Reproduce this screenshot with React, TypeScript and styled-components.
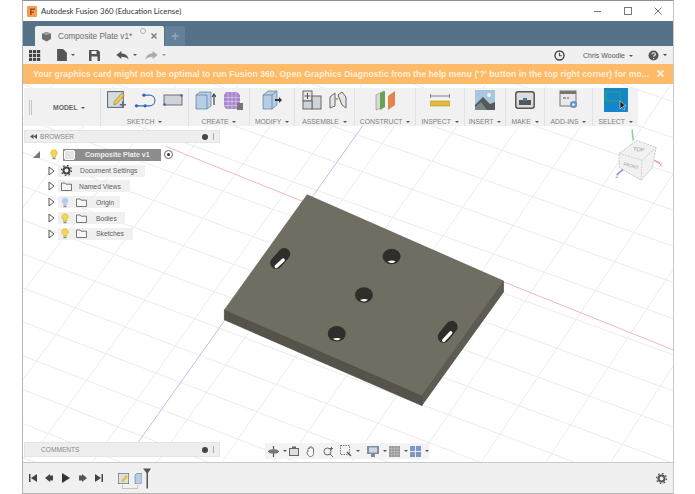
import React from 'react';
import styled, { createGlobalStyle } from 'styled-components';

const GlobalStyle = createGlobalStyle`
  html, body { margin: 0; padding: 0; background: #fff; }
  * { box-sizing: border-box; }
`;

const Page = styled.div`
  width: 695px;
  height: 494px;
  padding: 0 21px 0 22px;
  background: #fff;
  font-family: "Liberation Sans", Arial, sans-serif;
  overflow: hidden;
`;

const Window = styled.div`
  width: 652px;
  height: 494px;
  display: flex;
  flex-direction: column;
  border-top: 1px solid #8f8f8f;
  border-left: 1px solid #b5b5b5;
  border-right: 1px solid #c8c8c8;
`;

const TitleBar = styled.div`
  height: 20px;
  display: flex;
  align-items: center;
  padding-left: 4px;
  background: #fff;
  font-family: Lato, sans-serif;
  font-size: 7.8px;
  color: #333;
`;

const TitleText = styled.span`
  margin-left: 4px;
  flex: 1;
`;

const WindowButton = styled.div`
  width: 30px;
  height: 20px;
  display: flex;
  align-items: center;
  justify-content: center;
`;

const TabBar = styled.div`
  height: 25px;
  display: flex;
  align-items: flex-end;
  padding-left: 12px;
  background: #557289;
`;

const Tab = styled.div`
  position: relative;
  width: 129px;
  height: 20px;
  display: flex;
  align-items: center;
  padding-left: 6px;
  background: #f0f0f0;
  border-radius: 2px 2px 0 0;
  font-size: 8.2px;
  color: #6a6a6a;
`;

const TabLabel = styled.span`
  margin-left: 6px;
`;

const TabDot = styled.span`
  position: absolute;
  left: 105px;
  top: 2px;
  width: 6px;
  height: 6px;
  border-radius: 50%;
  border: 1px solid #8fc7c0;
`;

const TabClose = styled.span`
  position: absolute;
  left: 116px;
  top: 7px;
  line-height: 0;
`;

const NewTab = styled.div`
  width: 20px;
  height: 20px;
  margin-left: 1px;
  display: flex;
  align-items: center;
  justify-content: center;
  background: #64809a;
  border-radius: 2px 2px 0 0;
  color: #8ca3b7;
  font-size: 14px;
  font-weight: bold;
`;

const QuickBar = styled.div`
  height: 18px;
  display: flex;
  align-items: center;
  background: #f0f0f0;
  padding-left: 6px;
`;

const QuickGroup = styled.div<{ $w: number }>`
  width: ${(p) => p.$w}px;
  display: flex;
  align-items: center;
  gap: 2px;
`;

const Spacer = styled.div`
  flex: 1;
`;

const UserName = styled.span`
  font-size: 7px;
  color: #555;
  width: 65px;
  white-space: nowrap;
`;

const Caret = styled.span<{ $c?: string }>`
  display: inline-block;
  width: 0;
  height: 0;
  vertical-align: middle;
  margin-left: 2px;
  border-left: 2px solid transparent;
  border-right: 2px solid transparent;
  border-top: 2.5px solid ${(p) => p.$c || '#555'};
`;

const Banner = styled.div`
  height: 20px;
  display: flex;
  align-items: center;
  padding-left: 10px;
  background: #fdbb69;
  color: #fdeed8;
  font-size: 8.57px;
  font-weight: bold;
  white-space: nowrap;
  letter-spacing: 0.07px;
`;

const BannerClose = styled.span`
  position: absolute;
  left: 633px;
  top: 5px;
  line-height: 0;
`;

const BannerWrap = styled.div`
  position: relative;
`;

const Viewport = styled.div`
  position: relative;
  flex: 1;
  background: #fff;
  overflow: hidden;
`;

const SceneSvg = styled.svg`
  position: absolute;
  inset: 0;
  width: 100%;
  height: 100%;
`;

const Ribbon = styled.div`
  position: absolute;
  left: 1px;
  top: 4px;
  width: 614px;
  height: 38px;
  display: flex;
  background: #f1f1f1;
`;

const GripSection = styled.div`
  width: 77px;
  display: flex;
  align-items: center;
  padding-left: 5px;
  border-right: 1px solid #e2e2e2;
`;

const Grip = styled.div`
  width: 3px;
  height: 15px;
  border-left: 1px solid #c4c4c4;
  border-right: 1px solid #c4c4c4;
`;

const ModelLabel = styled.span`
  margin-left: 21px;
  font-size: 6.8px;
  font-weight: bold;
  color: #666;
`;

const Section = styled.div<{ $w: number; $last?: boolean }>`
  width: ${(p) => p.$w}px;
  display: flex;
  flex-direction: column;
  align-items: center;
  border-right: ${(p) => (p.$last ? 'none' : '1px solid #e2e2e2')};
`;

const IconRow = styled.div`
  height: 24px;
  display: flex;
  align-items: center;
  gap: 7px;
`;

const SectionLabel = styled.div`
  margin-top: 6px;
  font-size: 6.8px;
  color: #808080;
  white-space: nowrap;
`;

const Browser = styled.div`
  position: absolute;
  left: 1px;
  top: 46px;
  width: 196px;
`;

const PanelHeader = styled.div`
  height: 13px;
  display: flex;
  align-items: center;
  padding: 0 5px 0 5px;
  background: #eeeeee;
  border: 1px solid #e4e4e4;
  font-size: 6.6px;
  color: #8a8a8a;
`;

const HeaderTitle = styled.span<{ $indent: number }>`
  margin-left: ${(p) => p.$indent}px;
  flex: 1;
`;

const PinDot = styled.span`
  width: 6px;
  height: 6px;
  border-radius: 50%;
  background: #444;
  margin-right: 5px;
`;

const PanelEdge = styled.span`
  width: 1px;
  height: 7px;
  background: #aaa;
`;

const Tree = styled.div`
  display: flex;
  flex-direction: column;
  padding-top: 4px;
`;

const TreeRow = styled.div<{ $pad: number }>`
  height: 15.8px;
  display: flex;
  align-items: center;
  padding-left: ${(p) => p.$pad}px;
`;

const RootGap = styled.span`
  width: 10px;
`;

const Chip = styled.div<{ $w: number }>`
  width: ${(p) => p.$w}px;
  height: 12px;
  margin-left: 3px;
  display: flex;
  align-items: center;
  gap: 7px;
  padding-left: 3px;
  background: #f0f0f0;
  font-size: 6.8px;
  color: #5c5c5c;
  white-space: nowrap;
`;

const ChipText = styled.span<{ $ml: number }>`
  margin-left: ${(p) => p.$ml}px;
`;

const RootChip = styled.div`
  width: 98px;
  height: 12px;
  margin-left: 5px;
  display: flex;
  align-items: center;
  background: #8d8d8d;
  color: #ededed;
  font-size: 7px;
  font-weight: bold;
  white-space: nowrap;
`;

const RootIcon = styled.span`
  width: 11px;
  height: 10px;
  margin-left: 1px;
  background: #e4e4e4;
  border: 1px solid #fff;
  border-radius: 2px;
`;

const RootText = styled.span`
  margin-left: 10px;
`;

const Radio = styled.span`
  width: 9px;
  height: 9px;
  margin-left: 3px;
  border: 1px solid #666;
  border-radius: 50%;
  display: flex;
  align-items: center;
  justify-content: center;
  &::after {
    content: '';
    width: 3px;
    height: 3px;
    border-radius: 50%;
    background: #333;
  }
`;

const Comments = styled(PanelHeader)`
  position: absolute;
  left: 1px;
  bottom: 5px;
  width: 196px;
  height: 15px;
`;

const NavBar = styled.div`
  position: absolute;
  left: 242px;
  bottom: 3px;
  width: 164px;
  height: 16px;
  display: flex;
  align-items: center;
  gap: 2px;
  padding-left: 3px;
  background: #f3f3f3;
`;

const NavGap = styled.span<{ $w: number }>`
  width: ${(p) => p.$w}px;
`;

const Timeline = styled.div`
  position: relative;
  height: 32px;
  display: flex;
  align-items: center;
  padding: 0 6px 0 6px;
  background: #f0f0f0;
  border-top: 1px solid #c9c9c9;
  border-bottom: 1px solid #b5b5b5;
`;

const Transport = styled.div`
  display: flex;
  align-items: center;
  gap: 8px;
`;

const Steps = styled.div`
  display: flex;
  align-items: center;
  gap: 5px;
  margin-left: 15px;
`;

const Playhead = styled.span`
  margin-left: -4px;
`;

const Bracket = styled.span`
  position: absolute;
  left: 99px;
  top: 22px;
  width: 16px;
  height: 4px;
  border: 1px solid #c4c4c4;
  border-top: none;
`;

const S = ({ w, h = w, vb, children }: { w: number; h?: number; vb?: string; children: React.ReactNode }) => (
  <svg width={w} height={h} viewBox={vb || `0 0 ${w} ${h}`} style={{ display: 'block', flex: 'none' }}>
    {children}
  </svg>
);

const Bulb = ({ c }: { c: string }) => (
  <S w={8} h={11}>
    <path d="M4 .8a3.2 3.2 0 0 0-1.8 5.9V8h3.6V6.7A3.2 3.2 0 0 0 4 .8z" fill={c} stroke="#c9a93a" strokeOpacity={c === '#f6d84a' ? 1 : 0} strokeWidth=".5" />
    <rect x="2.5" y="8.6" width="3" height="1.6" fill="#888" />
  </S>
);

const Folder = () => (
  <S w={11} h={9}>
    <path d="M.5 8.5V1h3.5l1 1.2h5.5v6.3z" fill="#f6f6f6" stroke="#666" strokeWidth=".9" />
  </S>
);

const Tri = () => (
  <S w={7} h={10}>
    <path d="M1 1l5 4-5 4z" fill="#fff" stroke="#555" strokeWidth="1" />
  </S>
);

const Gear = () => (
  <S w={11} h={11}>
    <circle cx="5.5" cy="5.5" r="3" fill="none" stroke="#444" strokeWidth="2" />
    <circle cx="5.5" cy="5.5" r="5" fill="none" stroke="#444" strokeWidth="1.4" strokeDasharray="1.6 2.3" />
  </S>
);

const gridLines = () => {
  const out: React.ReactNode[] = [];
  // family running with the red axis, slope eases a little with distance
  for (let i = -14; i < 26; i++) {
    const y0 = 84 + i * 34;
    out.push(<line key={`a${i}`} x1={22} y1={y0} x2={674} y2={y0 + 652 * (0.36 + i * 0.0035)} />);
  }
  // family running with the blue axis
  for (let i = -14; i < 26; i++) {
    const x0 = 362 + i * 62 - 210;
    out.push(<line key={`b${i}`} x1={x0 + 210} y1={84} x2={x0 - 60 + i * 3} y2={462} />);
  }
  return out;
};

const Scene = () => (
  <SceneSvg viewBox="22 84 652 378">
    <g stroke="#e9ebef" strokeWidth="1">{gridLines()}</g>
    <line x1="165" y1="146" x2="674" y2="350" stroke="#f0b9b9" strokeWidth="1" />
    <line x1="368" y1="118" x2="136" y2="445" stroke="#bcc1ec" strokeWidth="1" />
    <path d="M224 310L422 396V406L224 320z" fill="#55534a" stroke="#3e3d35" strokeWidth=".6" />
    <path d="M422 396L504 281V292L422 406z" fill="#5d5b52" stroke="#3e3d35" strokeWidth=".6" />
    <path d="M307 194.5L504 281L422 396L224 310z" fill="#706d63" stroke="#5a584e" strokeWidth=".6" />
    {[[391.7, 256.5], [364, 295], [336.7, 334]].map(([x, y]) => (
      <g key={x}>
        <ellipse cx={x} cy={y} rx={9} ry={7.8} fill="#2f2e2a" />
        <path d={`M${x - 4} ${y + 5}Q${x} ${y + 3.4} ${x + 4} ${y + 4.6}Q${x + 1} ${y + 8.2} ${x - 4} ${y + 5}z`} fill="#fff" />
      </g>
    ))}
    {[[284, 254, 276, 263], [452, 327, 444, 337]].map(([a, b, c, d]) => (
      <g key={a}>
        <line x1={a} y1={b} x2={c} y2={d} stroke="#2f2e2a" strokeWidth="12" strokeLinecap="round" />
        <line x1={a - 1} y1={b + 6} x2={c} y2={d + 3.5} stroke="#fff" strokeWidth="3.4" strokeLinecap="round" />
      </g>
    ))}
    {/* view cube */}
    <g>
      <path d="M620 153L638 140L657 147L653 168L642 180L620 167z" fill="#f1f1f1" />
      <path d="M620 153L643 160L657 147M643 160L642 180" fill="none" stroke="#c6c6c6" strokeWidth=".8" strokeDasharray="2 1" />
      <path d="M620 153L638 140L657 147L653 168L642 180L620 167z" fill="none" stroke="#bdbdbd" strokeWidth=".8" strokeDasharray="2 1" />
      <text x="634" y="151" fontSize="5.5" fill="#999" fontFamily="Liberation Sans" transform="rotate(6 640 150)">TOP</text>
      <text x="624" y="167" fontSize="4.5" fill="#999" fontFamily="Liberation Sans" transform="rotate(14 632 166)">FRONT</text>
      <line x1="634" y1="140" x2="633" y2="129" stroke="#86d99a" strokeWidth="1.6" />
      <line x1="655" y1="160" x2="661" y2="163" stroke="#f29a9a" strokeWidth="1.6" />
      <line x1="624" y1="169" x2="618" y2="174" stroke="#9090ea" strokeWidth="1.6" />
      <text x="616" y="178" fontSize="5.5" fill="#8a8ae8" fontFamily="Liberation Sans">Z</text>
      <text x="660" y="167" fontSize="5.5" fill="#e88a8a" fontFamily="Liberation Sans">X</text>
    </g>
  </SceneSvg>
);

const App: React.FC = () => (
  <Page>
    <GlobalStyle />
    <Window>
      <TitleBar>
        <S w={10} h={11}>
          <rect width="10" height="11" rx="1" fill="#f0a050" />
          <path d="M3 2.5h5v1.5H4.6v1.4H7v1.4H4.6V9H3z" fill="#b4451f" />
        </S>
        <TitleText>Autodesk Fusion 360 (Education License)</TitleText>
        <WindowButton>
          <S w={10} h={10}><line x1="1" y1="5.5" x2="8" y2="5.5" stroke="#777" /></S>
        </WindowButton>
        <WindowButton>
          <S w={10} h={10}><rect x="1.5" y="1.5" width="7" height="7" fill="none" stroke="#777" /></S>
        </WindowButton>
        <WindowButton>
          <S w={10} h={10}><path d="M1.5 1.5l7 7M8.5 1.5l-7 7" stroke="#777" /></S>
        </WindowButton>
      </TitleBar>

      <TabBar>
        <Tab>
          <S w={11} h={11}>
            <path d="M1 2.5L5.5 1 10 2.5V8L5.5 10.5 1 8z" fill="#6f6f6f" />
            <path d="M1 2.5L5.5 4 10 2.5 5.5 1z" fill="#a4a4a4" />
          </S>
          <TabLabel>Composite Plate v1*</TabLabel>
          <TabDot />
          <TabClose>
            <S w={6} h={6}><path d="M.5.5l5 5M5.5.5l-5 5" stroke="#777" strokeWidth="1.4" /></S>
          </TabClose>
        </Tab>
        <NewTab>+</NewTab>
      </TabBar>

      <QuickBar>
        <QuickGroup $w={28}>
          <S w={12} h={11}>
            {[0, 4, 8].map((x) => [0, 4, 8].map((y) => <rect key={`${x}${y}`} x={x} y={y} width="3.2" height="3.2" fill="#444" />))}
          </S>
        </QuickGroup>
        <QuickGroup $w={32}>
          <S w={10} h={12} vb="0 0 9 11"><path d="M0 0h5.5L9 3.5V11H0z" fill="#555" /></S>
          <Caret />
        </QuickGroup>
        <QuickGroup $w={27}>
          <S w={11} h={11}>
            <path d="M0 0h9l2 2v9H0z" fill="#555" />
            <rect x="2.5" y="1" width="5" height="3" fill="#f0f0f0" />
            <rect x="2.5" y="6.5" width="6" height="4.5" fill="#f0f0f0" />
          </S>
        </QuickGroup>
        <QuickGroup $w={29}>
          <S w={13} h={9} vb="0 0 11 8"><path d="M0 3.5L4.5 0v2.2C8 2.2 10 4 11 7.5 9.5 5.8 7.5 5 4.5 5v2z" fill="#555" /></S>
          <Caret />
        </QuickGroup>
        <QuickGroup $w={20}>
          <S w={13} h={9} vb="0 0 11 8"><path d="M11 3.5L6.5 0v2.2C3 2.2 1 4 0 7.5 1.500 5.800 3.500 5 6.500 5v2z" fill="#aaa" /></S>
          <Caret $c="#999" />
        </QuickGroup>
        <Spacer />
        <QuickGroup $w={29}>
          <S w={11} h={11}>
            <circle cx="5.5" cy="5.5" r="4.5" fill="none" stroke="#444" strokeWidth="1.4" />
            <path d="M5.5 2.8v3h2.4" fill="none" stroke="#444" strokeWidth="1.1" />
          </S>
        </QuickGroup>
        <UserName>Chris Woodle <Caret /></UserName>
        <QuickGroup $w={25}>
          <S w={11} h={11}>
            <circle cx="5.5" cy="5.5" r="5" fill="#555" />
            <path d="M3.8 4.2c.2-2 3.6-2 3.6 0 0 1.3-1.8 1.3-1.8 2.6" fill="none" stroke="#f0f0f0" strokeWidth="1.1" />
            <circle cx="5.6" cy="8.6" r=".7" fill="#f0f0f0" />
          </S>
          <Caret $c="#444" />
        </QuickGroup>
      </QuickBar>

      <BannerWrap>
        <Banner>Your graphics card might not be optimal to run Fusion 360. Open Graphics Diagnostic from the help menu ('?' button in the top right corner) for mo...</Banner>
        <BannerClose>
          <S w={9} h={9}><path d="M1.5 1.5l6 6M7.5 1.5l-6 6" stroke="#fdeed8" strokeWidth="1.8" /></S>
        </BannerClose>
      </BannerWrap>

      <Viewport>
        <Scene />

        <Ribbon>
          <GripSection>
            <Grip />
            <ModelLabel>MODEL <Caret /></ModelLabel>
          </GripSection>
          <Section $w={88}>
            <IconRow>
              <S w={20} h={20} vb="0 0 19 19">
                <rect x=".5" y="1.5" width="15" height="15" fill="#d5dbe2" stroke="#5a6b7c" />
                <path d="M7 11l7-8 2.5 2-7 8-3 1z" fill="#f2c94c" stroke="#8a7a30" strokeWidth=".6" />
                <path d="M12 14h6M15 11v6" stroke="#667" strokeWidth="1.6" />
              </S>
              <S w={22} h={15} vb="0 0 20 14">
                <path d="M2 12h12c7 0 7-10 0-10H9" fill="none" stroke="#3b6fb8" strokeWidth="1" />
                <circle cx="2" cy="12" r="1.5" fill="#2c62c0" />
                <circle cx="10" cy="12" r="1.5" fill="#2c62c0" />
                <circle cx="9" cy="2" r="1.5" fill="#2c62c0" />
              </S>
              <S w={20} h={12}>
                <rect x="1" y="1" width="18" height="10" fill="#cfd2d6" stroke="#555" strokeWidth=".8" />
                <circle cx="1.5" cy="10.5" r="1.2" fill="#2c62c0" />
                <circle cx="18.5" cy="1.5" r="1.2" fill="#2c62c0" />
              </S>
            </IconRow>
            <SectionLabel>SKETCH <Caret /></SectionLabel>
          </Section>
          <Section $w={61}>
            <IconRow>
              <S w={21} h={19}>
                <path d="M1 4l4-3h11v14l-4 3H1z" fill="#b6cde6" stroke="#5b7b9c" strokeWidth=".7" />
                <path d="M1 4h11v14" fill="none" stroke="#5b7b9c" strokeWidth=".7" />
                <path d="M19 14V4M17 6l2-3 2 3" fill="none" stroke="#444" strokeWidth="1.2" />
              </S>
              <S w={20} h={19}>
                <path d="M3 1h11l3 3v11l-3 3H3L1 15V4z" fill="#a987cf" />
                <path d="M1 6.500h16M1 10.500h16M1 14.500h16M5 1v17M9 1v17M13 1v17" stroke="#e3d3f2" strokeWidth=".6" />
                <rect x="14" y="12" width="6" height="7" fill="#777" />
              </S>
            </IconRow>
            <SectionLabel>CREATE <Caret /></SectionLabel>
          </Section>
          <Section $w={45}>
            <IconRow>
              <S w={20} h={20}>
                <path d="M1 5l5-4h9v14l-5 4H1z" fill="#b6cde6" stroke="#5b7b9c" strokeWidth=".7" />
                <path d="M10 5v14M1 5h9l5-4" fill="none" stroke="#5b7b9c" strokeWidth=".7" />
                <path d="M13 9h4v-2l3 3-3 3v-2h-4z" fill="#333" />
              </S>
            </IconRow>
            <SectionLabel>MODIFY <Caret /></SectionLabel>
          </Section>
          <Section $w={60}>
            <IconRow>
              <S w={20} h={20}>
                <rect x="1" y="1" width="9" height="10" fill="#e6e6e6" stroke="#666" />
                <rect x="10" y="6" width="9" height="13" fill="#cfd4d9" stroke="#666" />
                <rect x="1" y="11" width="9" height="8" fill="#cfd4d9" stroke="#666" />
                <path d="M5.500 3v6M2.500 6h6" stroke="#555" />
              </S>
              <S w={18} h={18}>
                <path d="M1 6l5-4v13l-5 2zM9 4l4-3 4 5v11l-4-3z" fill="#e6e6e6" stroke="#666" />
                <path d="M6 8h3" stroke="#c59a3a" strokeWidth="1.6" />
              </S>
            </IconRow>
            <SectionLabel>ASSEMBLE <Caret /></SectionLabel>
          </Section>
          <Section $w={61}>
            <IconRow>
              <S w={21} h={21}>
                <path d="M1 5l8-4v16l-8 3z" fill="#d6ded4" stroke="#777" strokeWidth=".5" />
                <path d="M5 3l5-2v16l-5 3z" fill="#6aa25a" />
                <path d="M13 6l7-5v14l-7 5z" fill="#e2854a" />
              </S>
            </IconRow>
            <SectionLabel>CONSTRUCT <Caret /></SectionLabel>
          </Section>
          <Section $w={49}>
            <IconRow>
              <S w={20} h={15}>
                <path d="M.5 1v4M19.500 1v4M1 3h18" stroke="#666" strokeWidth=".8" />
                <rect x="0" y="8" width="20" height="5" fill="#e5ba3e" stroke="#a68a28" strokeWidth=".5" />
              </S>
            </IconRow>
            <SectionLabel>INSPECT <Caret /></SectionLabel>
          </Section>
          <Section $w={41}>
            <IconRow>
              <S w={20} h={20}>
                <rect width="20" height="20" fill="#a6c7dd" />
                <circle cx="14" cy="5" r="2" fill="#f3f3e4" />
                <path d="M0 20V15L8 7l7 7 5-2v8z" fill="#55595c" />
                <path d="M0 20v-3l6-5 6 8z" fill="#7d8488" />
              </S>
            </IconRow>
            <SectionLabel>INSERT <Caret /></SectionLabel>
          </Section>
          <Section $w={39}>
            <IconRow>
              <S w={20} h={18}>
                <rect x=".8" y=".8" width="18.400" height="16.400" rx="2.500" fill="#dcdcdc" stroke="#555" strokeWidth="1.500" />
                <rect x="4" y="9" width="12" height="5" fill="#555" />
                <path d="M8 7h4v3H8z" fill="#2c7fc0" />
              </S>
            </IconRow>
            <SectionLabel>MAKE <Caret /></SectionLabel>
          </Section>
          <Section $w={48}>
            <IconRow>
              <S w={20} h={20}>
                <rect x="1" y="1" width="16" height="15" fill="#e8e8e8" stroke="#777" />
                <rect x="1" y="1" width="16" height="3" fill="#777" />
                <path d="M4 8h3M8 8h2" stroke="#555" />
                <circle cx="14.500" cy="14.500" r="3.500" fill="#5e93c8" />
                <circle cx="14.500" cy="14.500" r="1.300" fill="#fff" />
              </S>
            </IconRow>
            <SectionLabel>ADD-INS <Caret /></SectionLabel>
          </Section>
          <Section $w={45} $last>
            <IconRow>
              <S w={24} h={24}>
                <rect width="24" height="24" fill="#1386cc" />
                <rect x="2" y="4" width="14" height="9" fill="none" stroke="#3aa34f" strokeWidth="1" />
                <path d="M16 13v8l2-2 2 3 1-1-2-3h3z" fill="#222" stroke="#fff" strokeWidth=".5" />
              </S>
            </IconRow>
            <SectionLabel>SELECT <Caret /></SectionLabel>
          </Section>
        </Ribbon>

        <Browser>
          <PanelHeader>
            <S w={7} h={5}><path d="M3.500 0v5L0 2.500zM7 0v5L3.500 2.500z" fill="#555" /></S>
            <HeaderTitle $indent={3}>BROWSER</HeaderTitle>
            <PinDot />
            <PanelEdge />
          </PanelHeader>
          <Tree>
            <TreeRow $pad={9}>
              <S w={7} h={7}><path d="M0 7L7 0v7z" fill="#777" /></S>
              <RootGap />
              <Bulb c="#f6d84a" />
              <RootChip>
                <RootIcon />
                <RootText>Composite Plate v1</RootText>
              </RootChip>
              <Radio />
            </TreeRow>
            <TreeRow $pad={24}>
              <Tri />
              <Chip $w={87}>
                <Gear />
                <ChipText $ml={1}>Document Settings</ChipText>
              </Chip>
            </TreeRow>
            <TreeRow $pad={24}>
              <Tri />
              <Chip $w={72}>
                <Folder />
                <ChipText $ml={0}>Named Views</ChipText>
              </Chip>
            </TreeRow>
            <TreeRow $pad={24}>
              <Tri />
              <Chip $w={62}>
                <Bulb c="#b3cdf0" />
                <Folder />
                <ChipText $ml={2}>Origin</ChipText>
              </Chip>
            </TreeRow>
            <TreeRow $pad={24}>
              <Tri />
              <Chip $w={67}>
                <Bulb c="#f6d84a" />
                <Folder />
                <ChipText $ml={2}>Bodies</ChipText>
              </Chip>
            </TreeRow>
            <TreeRow $pad={24}>
              <Tri />
              <Chip $w={75}>
                <Bulb c="#f6d84a" />
                <Folder />
                <ChipText $ml={2}>Sketches</ChipText>
              </Chip>
            </TreeRow>
          </Tree>
        </Browser>

        <Comments>
          <HeaderTitle $indent={11}>COMMENTS</HeaderTitle>
          <PinDot />
          <PanelEdge />
        </Comments>

        <NavBar>
          <S w={11} h={11}><path d="M5.500 0v11M0 5.500h11" stroke="#555" strokeWidth="1.200" /><ellipse cx="5.500" cy="5.500" rx="5" ry="2.200" fill="#777" /></S>
          <Caret />
          <S w={10} h={10}><rect x=".5" y="2.500" width="9" height="7" fill="#ddd" stroke="#666" /><rect x="3" y=".5" width="4" height="2" fill="#666" /></S>
          <NavGap $w={3} />
          <S w={10} h={11}><path d="M2 6V3c0-1 1.300-1 1.300 0V1.500c0-1 1.400-1 1.400 0V1.500c0-1 1.400-1 1.400 0v1c0-1 1.400-1 1.400 0V7c0 2-1 3.500-3 3.500S2.500 9.500 1 7c-.5-1 .5-1.500 1-1z" fill="#fff" stroke="#555" strokeWidth=".8" /></S>
          <NavGap $w={3} />
          <S w={11} h={11}><circle cx="4.500" cy="5.500" r="3.500" fill="none" stroke="#666" /><path d="M7 8l3 3M8.500 1v3M7 2.500h3" stroke="#666" /></S>
          <NavGap $w={3} />
          <S w={12} h={12}><rect x=".5" y=".5" width="9" height="9" fill="none" stroke="#777" strokeDasharray="1.500 1" /><path d="M7 7l4 4" stroke="#555" strokeWidth="1.500" /></S>
          <Caret />
          <NavGap $w={3} />
          <S w={12} h={11}><rect width="12" height="8" fill="#7f90a6" /><rect x="2" y="1.500" width="8" height="5" fill="#cfd8e2" /><rect x="4" y="8" width="4" height="3" fill="#888" /></S>
          <Caret />
          <S w={11} h={11}><rect width="11" height="11" fill="#9a9a9a" /><path d="M0 2.700h11M0 5.500h11M0 8.200h11M2.700 0v11M5.500 0v11M8.200 0v11" stroke="#c4c4c4" strokeWidth=".5" /></S>
          <Caret />
          <S w={11} h={11}><rect width="11" height="11" fill="#7b96c7" /><path d="M5.500 0v11M0 5.500h11" stroke="#e6edf6" /></S>
          <Caret />
        </NavBar>
      </Viewport>

      <Timeline>
        <Transport>
          <S w={8} h={8}><path d="M0 0h1.500v8H0zM8 0v8L2 4z" fill="#444" /></S>
          <S w={9} h={8}><path d="M5 0v8L0 4zM5 1.500h3v5H5z" fill="#444" /></S>
          <S w={8} h={10}><path d="M0 0l8 5-8 5z" fill="#333" /></S>
          <S w={9} h={8}><path d="M4 0v8l5-4zM1 1.500h3v5H1z" fill="#555" /></S>
          <S w={8} h={8}><path d="M8 0H6.500v8H8zM0 0v8l6-4z" fill="#444" /></S>
        </Transport>
        <Steps>
          <S w={11} h={11}>
            <rect width="11" height="11" fill="#dbe0e6" stroke="#445" />
            <path d="M3 8l5-6 2 1.500-5 6z" fill="#e9c238" />
          </S>
          <S w={8} h={11}><path d="M1 2l1.500-1.500H8V9l-1.500 2H1z" fill="#b6cde6" stroke="#5b7b9c" strokeWidth=".6" /></S>
          <Playhead>
            <S w={8} h={21} vb="0 0 8 20">
              <path d="M0 0h8L5 4.500V20H3.500V4.500z" fill="#555" />
            </S>
          </Playhead>
        </Steps>
        <Bracket />
        <Spacer />
        <S w={11} h={11}>
          <circle cx="5.500" cy="5.500" r="3" fill="none" stroke="#555" strokeWidth="2" />
          <circle cx="5.500" cy="5.500" r="5" fill="none" stroke="#555" strokeWidth="1.400" strokeDasharray="1.600 2.300" />
        </S>
      </Timeline>
    </Window>
  </Page>
);

export default App;
